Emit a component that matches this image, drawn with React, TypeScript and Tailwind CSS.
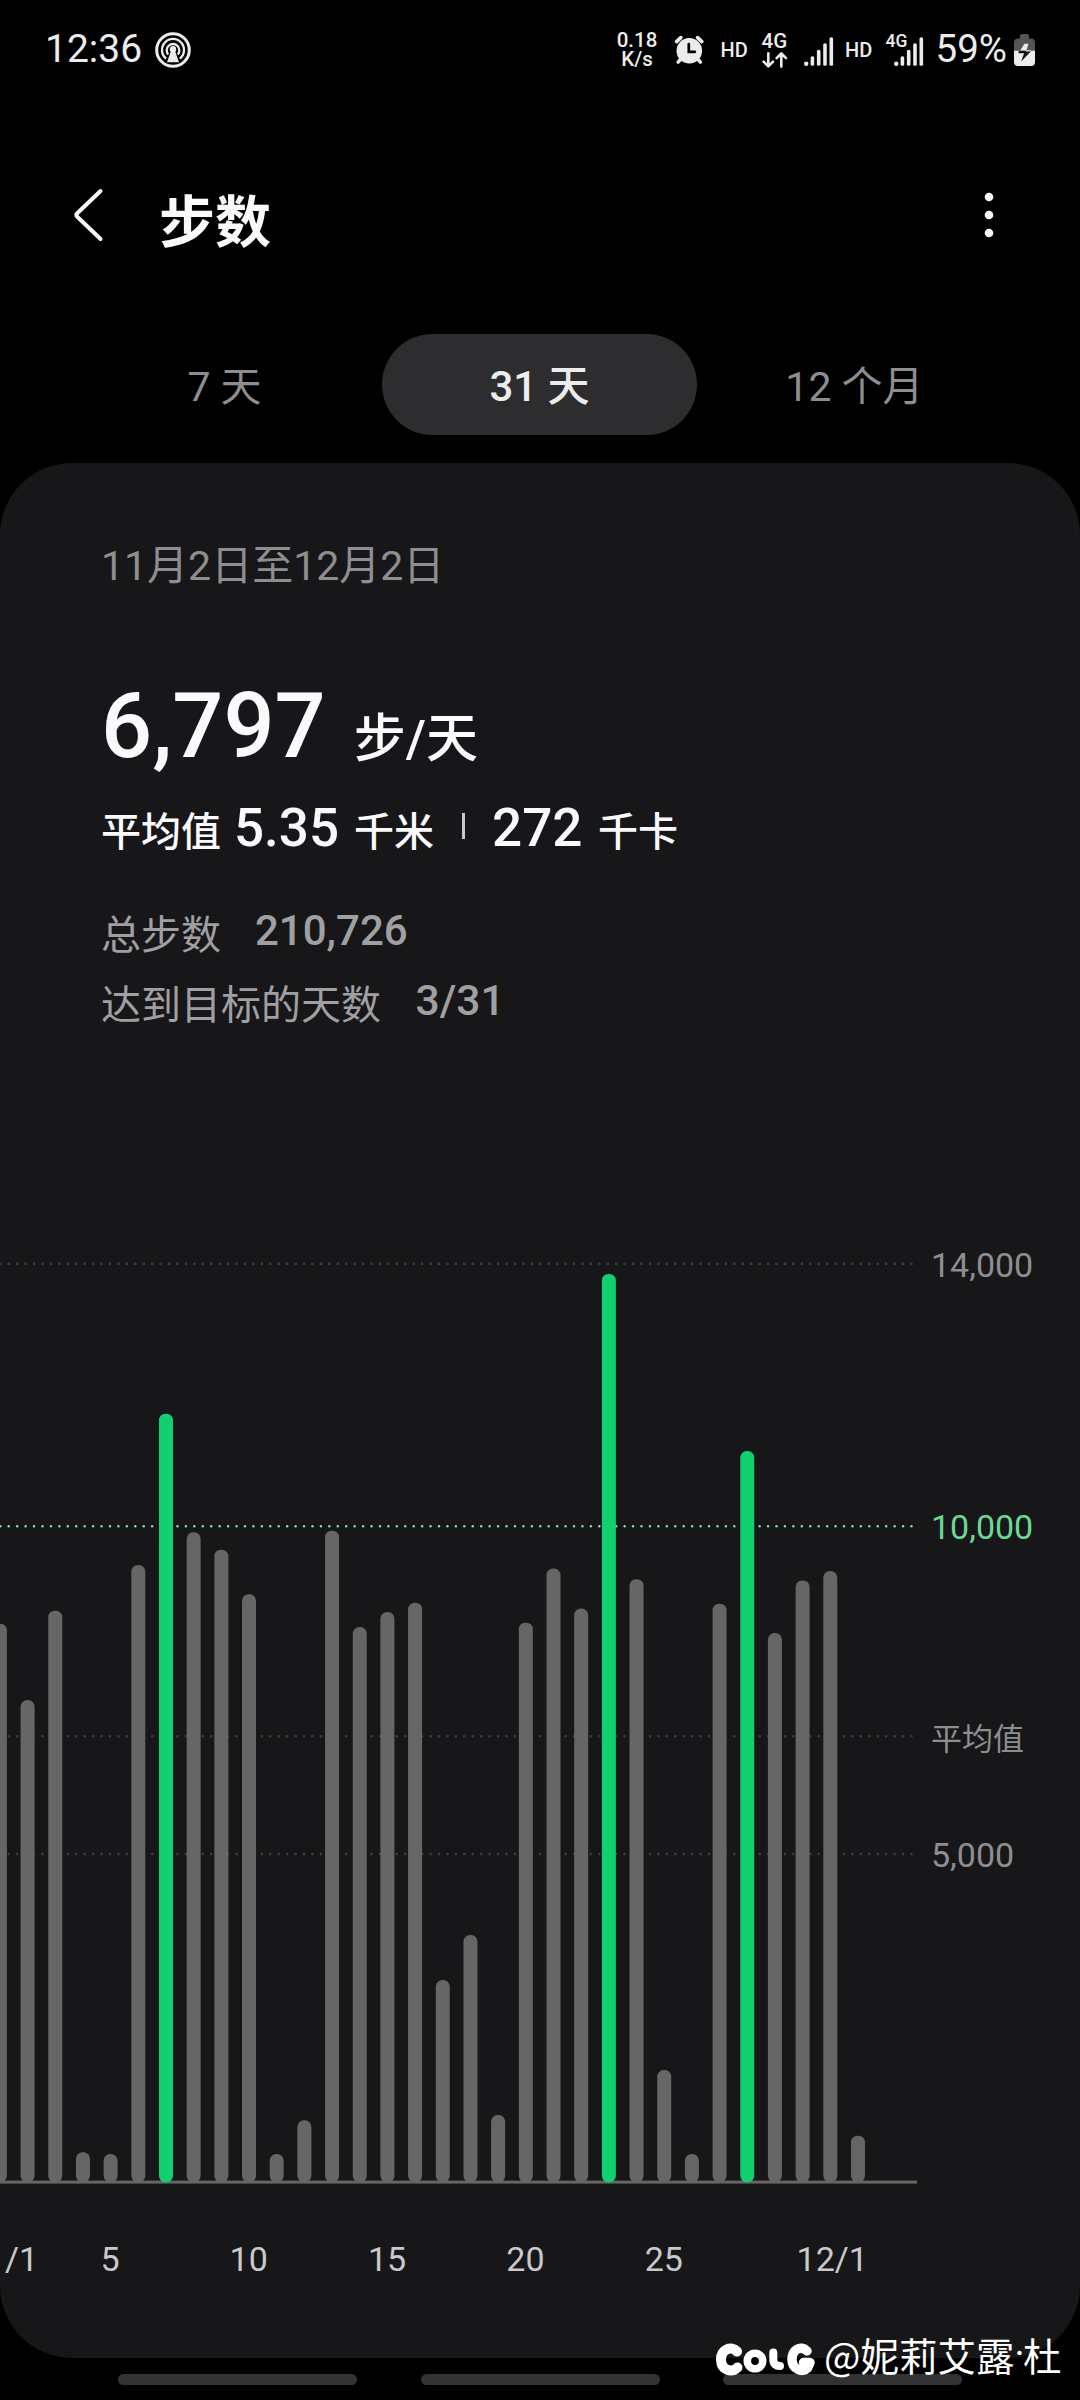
import type { ReactNode } from "react";

const PITCH = 27.68;
const CHART_TOP = 1240;
const BASE = 942.3;

// Top edge of every bar, in page pixels, starting at 1 November.
const tops = [
  1623.7, 1700, 1610.7, 2152.3, 2154, 1565, 1413.7, 1532.3, 1549.7, 1594.3, 2154, 2120.3, 1530.7, 1627, 1612, 1602.7,
  1980, 1935, 2115, 1622.7, 1568.6, 1608.6, 1273.9, 1579.2, 2070, 2154, 1603.7, 1451, 1633, 1580.4, 1571, 2135.7,
];
const reached = new Set([6, 22, 27]);

const gridLines = [
  { y: 23.9, color: "#404042" },
  { y: 286.3, color: "#7be3ab" },
  { y: 496.3, color: "#404042" },
  { y: 614, color: "#404042" },
];

function Chart() {
  return (
    <svg className="block h-[950px] w-[918px] shrink-0" viewBox="0 0 918 950" fill="none">
      {gridLines.map((g) => (
        <line key={g.y} x1="0.3" x2="913" y1={g.y} y2={g.y} stroke={g.color} strokeWidth="2.6" strokeLinecap="round" strokeDasharray="0 8.437" />
      ))}
      <rect x="0" y="940.6" width="917" height="3" fill="#666666" />
      {tops.map((t, i) => (
        <rect
          key={i}
          x={i * PITCH - 7.1}
          y={t - CHART_TOP}
          width="14"
          height={BASE - (t - CHART_TOP)}
          rx="6.5"
          fill={reached.has(i) ? "#11d06f" : "#666666"}
        />
      ))}
    </svg>
  );
}

function SignalBars() {
  return (
    <svg className="block h-8 w-[30px] shrink-0" viewBox="0 0 30 32" fill="#ececec">
      <circle cx="2.2" cy="28.7" r="2.2" />
      <rect x="6.6" y="21.3" width="3.6" height="9.5" rx="1.6" />
      <rect x="12.9" y="14.8" width="3.6" height="16" rx="1.6" />
      <rect x="19.2" y="8.2" width="3.6" height="22.6" rx="1.6" />
      <rect x="25.5" y="2.2" width="3.6" height="28.6" rx="1.6" />
    </svg>
  );
}

function StatusBar() {
  return (
    <div className="flex h-[100px] items-start text-[#ececec]">
      <div className="ml-[45px] mt-[29px] h-10 w-[98px] text-[39px] leading-[40px]">12:36</div>
      <svg className="ml-[12px] mt-[32px] block h-9 w-9" viewBox="0 0 36 36" fill="none" stroke="#ececec">
        <circle cx="18" cy="18" r="16.3" strokeWidth="3" />
        <path d="M11.2 26.6a11 11 0 1 1 13.6 0" strokeWidth="2.3" />
        <path d="M13.2 22.4a6.3 6.3 0 1 1 9.6 0" strokeWidth="2.3" />
        <circle cx="18" cy="17.3" r="3.2" fill="#ececec" stroke="none" />
        <path d="M16.3 18h3.4l4.3 12.2H12z" fill="#ececec" stroke="none" />
      </svg>
      <div className="ml-[424px] mt-[31px] w-[44px] text-center text-[20.5px] font-medium leading-[19px]">
        <div>0.18</div>
        <div>K/s</div>
      </div>
      <svg className="ml-[14.5px] mt-[35px] block h-[30px] w-[30px]" viewBox="0 0 30 30" fill="none" stroke="#ececec" strokeLinecap="round">
        <circle cx="15.3" cy="15.8" r="12.8" fill="#ececec" stroke="none" />
        <path d="M2.6 6.6l4.2-4M27.8 6.6l-4.2-4" strokeWidth="3.6" />
        <path d="M6.5 24.3l-2.4 2.9M24 24.3l2.4 2.9" strokeWidth="3.4" />
        <path d="M14.8 9.2v7.6h6" stroke="#000" strokeWidth="2.7" />
      </svg>
      <div className="ml-[17px] mt-[39.5px] w-[29px] text-[20px] font-medium leading-[20px]">HD</div>
      <div className="ml-[12px] mt-[31px] w-[26px]">
        <div className="text-[20.5px] font-medium leading-[20px]">4G</div>
        <svg className="block h-[17px] w-[26px]" viewBox="0 0 26 17" fill="none" stroke="#ececec" strokeWidth="2.6" strokeLinecap="round" strokeLinejoin="round">
          <path d="M6.3 2.4v12.8M1.6 10.7l4.7 4.7 4.7-4.7" />
          <path d="M19.3 15.6V2.8M14.6 7.2l4.7-4.7 4.7 4.7" />
        </svg>
      </div>
      <div className="ml-[16px] mt-[35px]">
        <SignalBars />
      </div>
      <div className="ml-[11.5px] mt-[39.5px] w-[29px] text-[20px] font-medium leading-[20px]">HD</div>
      <div className="relative ml-[20px] mt-[35px]">
        <SignalBars />
        <span className="absolute -left-[8.5px] -top-[3px] text-[17.5px] font-medium leading-[18px]">4G</span>
      </div>
      <div className="ml-[11.5px] mt-[29px] w-[74px] text-[38.5px] leading-[40px]">59%</div>
      <svg className="ml-[4.5px] mt-[34px] block h-8 w-[21px]" viewBox="0 0 21 32">
        <path d="M6 4.6V2a2 2 0 0 1 2-2h5a2 2 0 0 1 2 2v2.6h2a4 4 0 0 1 4 4V17H0V8.6a4 4 0 0 1 4-4z" fill="#555" />
        <path d="M0 16.7h21V28a4 4 0 0 1-4 4H4a4 4 0 0 1-4-4z" fill="#ececec" />
        <path d="M10.5 9.7h4l-2.2 7H6z" fill="#ececec" />
        <path d="M4.800 16.700h12.700L7.200 27.500l2.900-8.300H4.400z" fill="#111" />
        <path d="M12.300 16.200h5l-.9 1.300h-4.500z" fill="#ececec" />
      </svg>
    </div>
  );
}

function Tab({ active, children }: { active?: boolean; children: ReactNode }) {
  return (
    <div
      className={
        active
          ? "h-[101px] w-[315px] rounded-full bg-[#2d2d2f] text-center text-[42px] font-medium leading-[105px] text-[#ececec]"
          : "h-[101px] w-[315px] text-center text-[41px] leading-[106px] text-[#8e8e90]"
      }
    >
      {children}
    </div>
  );
}

function ColgLogo() {
  return (
    <svg className="block h-[38px] w-[104px] shrink-0" viewBox="0 0 104 38" fill="none" stroke="#fff" strokeLinecap="round" strokeLinejoin="round">
      <path d="M22 11.5C16.500 5.500 6 9 6 19.500S16.500 33.500 22.500 27.500" strokeWidth="10" />
      <circle cx="40" cy="21" r="7.700" strokeWidth="7.600" />
      <path d="M58.300 12.500V19.500c0 4.500 2.500 6.500 6.700 6.500" strokeWidth="8" />
      <path d="M92 11C85.500 4.500 77 10 77 19.500S87.500 33.500 92.500 28L95 22.500H88.500" strokeWidth="9.500" />
    </svg>
  );
}

export default function App() {
  return (
    <div className="relative h-[2400px] w-[1080px] overflow-hidden bg-black font-[Roboto,'Noto_Sans_CJK_SC',sans-serif]">
      <StatusBar />

      <header className="flex h-[234px] items-start">
        <svg className="ml-[72px] mt-[87px] block h-[56px] w-[32px]" viewBox="0 0 32 56" fill="none" stroke="#fafafa" strokeWidth="4" strokeLinecap="round" strokeLinejoin="round">
          <path d="M28.500 4L5 26.500a2 2 0 0 0 0 3L28.500 52" />
        </svg>
        <h1 className="ml-[55px] mt-[88px] w-[120px] text-[56px] font-bold leading-[70px] text-[#fafafc]">步数</h1>
        <svg className="ml-[702px] mt-[91px] block h-12 w-4" viewBox="0 0 16 48" fill="#fafafa">
          <circle cx="8" cy="6" r="4.300" />
          <circle cx="8" cy="24" r="4.300" />
          <circle cx="8" cy="42" r="4.300" />
        </svg>
      </header>

      <nav className="flex h-[129px] pl-[67px]">
        <Tab>7 天</Tab>
        <Tab active>31 天</Tab>
        <Tab>12 个月</Tab>
      </nav>

      <main className="h-[1895px] overflow-hidden rounded-[72px] bg-[#171719]">
        <section className="h-[777px] pl-[101px] pt-[73px]">
          <div className="h-[60px] text-[41px] leading-[60px] text-[#8e8e90]">11月2日至12月2日</div>
          <div className="mt-[68px] flex h-[100px] items-baseline whitespace-nowrap font-medium leading-[126px] text-[#fafafc]">
            <span className="text-[90px]">6,797</span>
            <span className="ml-[28px] text-[52px]">步/天</span>
          </div>
          <div className="mt-[34px] flex h-[60px] items-baseline whitespace-nowrap text-[40px] font-medium leading-[60px] text-[#fafafc]">
            <span>平均值</span>
            <span className="ml-[13px] text-[53px]">5.35</span>
            <span className="ml-[15px]">千米</span>
            <span className="ml-[28px] mr-[27.5px] h-[26px] w-[2.5px] translate-y-[-2px] self-center bg-[#c8c8ca]" />
            <span className="text-[53px]">272</span>
            <span className="ml-[15.5px]">千卡</span>
          </div>
          <div className="mt-[43px] flex h-[70px] whitespace-nowrap leading-[60px] text-[#a0a0a2]">
            <span className="pt-[5px] text-[40px]">总步数</span>
            <span className="ml-[34px] text-[42px] font-medium">210,726</span>
          </div>
          <div className="flex h-[70px] whitespace-nowrap leading-[60px] text-[#a0a0a2]">
            <span className="pt-[5px] text-[40px]">达到目标的天数</span>
            <span className="ml-[34.5px] text-[42.5px] font-medium">3/31</span>
          </div>
        </section>

        <section className="flex h-[950px]">
          <Chart />
          <div className="ml-[13px] w-[140px] text-[34px] leading-[40px] text-[#8e8e90]">
            <div className="mt-[5px] h-[262px]">14,000</div>
            <div className="h-[213px] text-[#69d893]">10,000</div>
            <div className="h-[114.5px] text-[31px]">平均值</div>
            <div>5,000</div>
          </div>
        </section>

        <div className="flex h-[100px] pt-[49px] text-center text-[34px] leading-[40px] text-[#c9c9cb]">
          <span className="w-[55px] pl-[5px] text-left">/1</span>
          <span className="w-[110px]">5</span>
          <span className="ml-[14.500px] w-[138.400px]">10</span>
          <span className="w-[138.400px]">15</span>
          <span className="w-[138.400px]">20</span>
          <span className="w-[138.400px]">25</span>
          <span className="ml-[30px] w-[138.400px]">12/1</span>
        </div>
      </main>

      <div className="flex h-[42px] gap-[63.5px] pl-[118px] pt-[16px]">
        <span className="h-[11px] w-[239px] rounded-full bg-[#333333]" />
        <span className="h-[11px] w-[239px] rounded-full bg-[#333333]" />
        <span className="h-[11px] w-[239px] rounded-full bg-[#333333]" />
      </div>

      <div className="absolute left-[715px] top-[2329px] flex items-start whitespace-nowrap text-white">
        <div className="pt-[11px]">
          <ColgLogo />
        </div>
        <span className="ml-[5px] flex font-['Noto_Sans_CJK_SC',sans-serif] text-[38.5px] leading-[50px]">
          @妮莉艾露
          <span className="w-[8.5px] text-center font-[Roboto,sans-serif]">·</span>杜
        </span>
      </div>
    </div>
  );
}
